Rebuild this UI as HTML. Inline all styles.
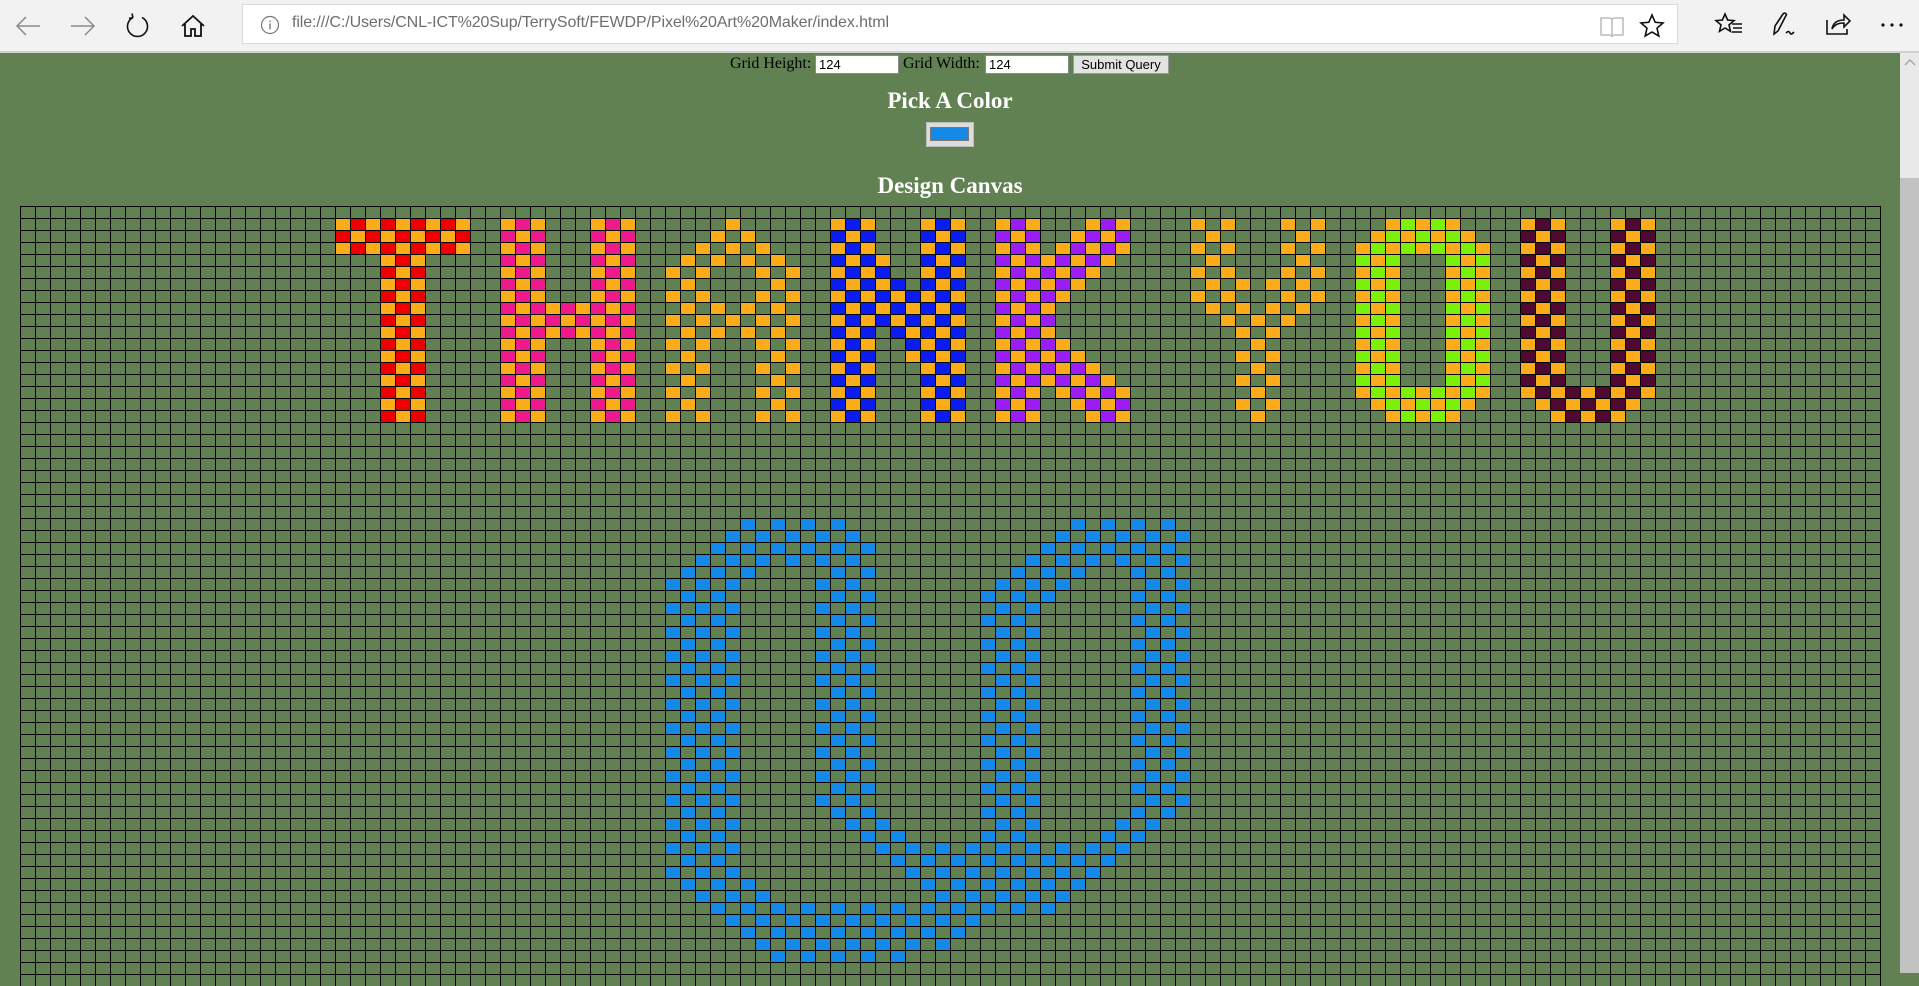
<!DOCTYPE html>
<html><head><meta charset="utf-8">
<style>
html,body{margin:0;padding:0;width:1919px;height:973px;overflow:hidden;background:#628153;}
#tb{position:absolute;left:0;top:0;width:1919px;height:51px;background:#f2f2f2;border-bottom:2px solid #cfcfcf;}
#addr{position:absolute;left:242px;top:4px;width:1436px;height:40px;background:#fff;border:1px solid #d9d9d9;box-sizing:border-box;}
#url{position:absolute;left:49px;top:9px;font:16px "Liberation Sans",sans-serif;color:#6e6e6e;white-space:nowrap;letter-spacing:-0.1px;}
svg.i{position:absolute;}
#sb{position:absolute;left:1900px;top:53px;width:19px;height:920px;background:#e9e9e9;}
#thumb{position:absolute;left:1900px;top:178px;width:19px;height:795px;background:#c2c2c2;}
.lbl{position:absolute;font:16px "Liberation Serif",serif;color:#000;top:55px;}
.inp{position:absolute;top:55px;height:19px;background:#fff;border:1px solid #8a8a8a;box-sizing:border-box;font:13px "Liberation Sans",sans-serif;padding-left:3px;line-height:17px;}
#btn{position:absolute;left:1073px;top:55px;width:96px;height:19px;background:#e3e3e3;border:1px solid #9a9a9a;box-sizing:border-box;font:13px "Liberation Sans",sans-serif;text-align:center;line-height:17px;color:#000;}
h2{position:absolute;margin:0;width:1900px;left:0;text-align:center;font:bold 23px "Liberation Serif",serif;color:#fff;}
#sw{position:absolute;left:926px;top:122px;width:48px;height:25px;background:#dcdcdc;border:1px solid #bdbdbd;box-sizing:border-box;}
#sw div{position:absolute;left:3px;top:4px;width:39px;height:14px;background:#1589e8;border:1px solid #777;box-sizing:border-box;}
#grid{position:absolute;left:20px;top:206px;width:1861px;height:780px;
background-image:linear-gradient(to right,#000 1px,transparent 1px),linear-gradient(to bottom,#000 1px,transparent 1px);
background-size:15px 12px;}
#grid i{position:absolute;width:14px;height:11px;}
</style></head><body>
<div id="tb">
<svg class="i" style="left:14px;top:14px" width="28" height="24" viewBox="0 0 28 24"><path d="M26 12H3M12 3L3 12l9 9" fill="none" stroke="#8a8a8a" stroke-width="1.5"/></svg>
<svg class="i" style="left:69px;top:14px" width="28" height="24" viewBox="0 0 28 24"><path d="M2 12h23M16 3l9 9-9 9" fill="none" stroke="#8a8a8a" stroke-width="1.5"/></svg>
<svg class="i" style="left:124px;top:12px" width="28" height="28" viewBox="0 0 28 28"><path d="M9 5.5A10 10 0 1 0 18 5.5M9 5.5L8 1.5M9 5.5L5 6.5" fill="none" stroke="#111" stroke-width="1.6"/></svg>
<svg class="i" style="left:180px;top:13px" width="26" height="26" viewBox="0 0 26 26"><path d="M2 13L13 3l11 10M5 11v12h6v-7h4v7h6V11" fill="none" stroke="#111" stroke-width="1.8"/></svg>
<div id="addr">
<svg class="i" style="left:17px;top:10px" width="20" height="20" viewBox="0 0 20 20"><circle cx="10" cy="10" r="8.5" fill="none" stroke="#777" stroke-width="1.2"/><path d="M10 8.5v6M10 5.5v1.5" stroke="#777" stroke-width="1.4"/></svg>
<div id="url">file:///C:/Users/CNL-ICT%20Sup/TerrySoft/FEWDP/Pixel%20Art%20Maker/index.html</div>
<svg class="i" style="left:1356px;top:10px" width="26" height="24" viewBox="0 0 26 24"><path d="M2 3h8c2 0 3 1 3 2v17c0-1-1-2-3-2H2zM24 3h-8c-2 0-3 1-3 2v17c0-1 1-2 3-2h8z" fill="none" stroke="#bbb" stroke-width="1.5"/></svg>
<svg class="i" style="left:1396px;top:8px" width="26" height="26" viewBox="0 0 26 26"><path d="M13 2l3.2 7.3 7.8.7-6 5.2 1.8 7.8L13 19l-6.8 4 1.8-7.8-6-5.2 7.8-.7z" fill="none" stroke="#111" stroke-width="1.6"/></svg>
</div>
<svg class="i" style="left:1714px;top:12px" width="30" height="26" viewBox="0 0 30 26"><path d="M11 2l2.6 6 6.4.6-5 4.3 1.5 6.4L11 16l-5.5 3.3 1.5-6.4-5-4.3 6.4-.6z" fill="none" stroke="#111" stroke-width="1.6"/><path d="M18 12h10M19 16h9M18 20h10" stroke="#111" stroke-width="1.6"/></svg>
<svg class="i" style="left:1771px;top:11px" width="26" height="26" viewBox="0 0 26 26"><path d="M3 23L4 15 12 3c1-1.5 3-1 3.5.5L7 20zM7 20l-4 3M15 22c2-2 3-2 4 0s2 1 4-1" fill="none" stroke="#111" stroke-width="1.6"/></svg>
<svg class="i" style="left:1824px;top:11px" width="28" height="26" viewBox="0 0 28 26"><path d="M3 9v14h20v-5M8 18c1-6 5-9 12-9V4l6 6-6 6v-4c-5 0-9 1-12 6z" fill="none" stroke="#111" stroke-width="1.6"/></svg>
<svg class="i" style="left:1880px;top:22px" width="26" height="6" viewBox="0 0 26 6"><circle cx="3" cy="3" r="1.6" fill="#111"/><circle cx="12" cy="3" r="1.6" fill="#111"/><circle cx="21" cy="3" r="1.6" fill="#111"/></svg>
</div>
<div id="sb"></div><div id="thumb"></div>
<svg class="i" style="left:1904px;top:58px" width="12" height="8" viewBox="0 0 12 8"><path d="M1 7l5-5 5 5" fill="none" stroke="#999" stroke-width="1.2"/></svg>

<div class="lbl" style="left:730px">Grid Height:</div>
<div class="inp" style="left:815px;width:84px">124</div>
<div class="lbl" style="left:903px">Grid Width:</div>
<div class="inp" style="left:985px;width:84px">124</div>
<div id="btn">Submit Query</div>
<h2 style="top:88px">Pick A Color</h2>
<div id="sw"><div></div></div>
<h2 style="top:173px">Design Canvas</h2>
<div id="grid"></div>
<script>
var O='#fcab19',g=document.getElementById('grid'),h='';
function px(r,c,col){h+='<i style="left:'+(c*15+1)+'px;top:'+(r*12+1)+'px;background:'+col+'"></i>';}
function f(r,a,b,col,p){for(var c=a;c<=b;c++){px(r,c,((r+c)%2==p)?O:col);}}
function only(r,a,b,col,p){for(var c=a;c<=b;c++){if((r+c)%2==p)px(r,c,col);}}
var r;
for(r=1;r<=3;r++)f(r,21,29,'#ee0000',0);
for(r=4;r<=17;r++)f(r,24,26,'#ee0000',0);
for(r=1;r<=17;r++){f(r,32,34,'#ee1a8c',1);f(r,38,40,'#ee1a8c',1);}
for(r=8;r<=10;r++)f(r,35,37,'#ee1a8c',1);
var A={1:[47],2:[46,48],3:[45,47,49],4:[44,46,48,50],5:[43,45,49,51],6:[44,50],7:[43,45,49,51],8:[44,46,48,50],9:[43,45,47,49,51],10:[44,46,48,50]};
for(r=11;r<=17;r++)A[r]=(r%2)?[43,45,49,51]:[44,50];
for(r in A)A[r].forEach(function(c){px(+r,c,O);});
var B='#0a1cf0';
for(r=1;r<=17;r++){f(r,54,56,B,1);f(r,60,62,B,1);}
var Nd={4:[57,57],5:[57,57],6:[57,58],7:[57,59],8:[57,59],9:[57,59],10:[58,59],11:[59,59],12:[59,59]};
for(r in Nd)f(+r,Nd[r][0],Nd[r][1],B,1);
var P='#9b1cf5';
for(r=1;r<=17;r++)f(r,65,67,P,0);
var Kd={1:[71,73],2:[70,73],3:[69,73],4:[68,72],5:[68,71],6:[68,70],7:[68,69],8:[68,68],9:[68,68],10:[68,68],11:[68,69],12:[68,70],13:[68,71],14:[68,72],15:[69,73],16:[70,73],17:[71,73]};
for(r in Kd)f(+r,Kd[r][0],Kd[r][1],P,0);
var Y={1:[78,80,84,86],2:[79,85],3:[78,80,84,86],4:[79,85],5:[78,80,84,86],6:[79,81,83,85],7:[78,80,84,86],8:[79,81,83,85],9:[80,82,84],10:[81,83],11:[82],12:[81,83],13:[82],14:[81,83],15:[82],16:[81,83],17:[82]};
for(r in Y)Y[r].forEach(function(c){px(+r,c,O);});
var G='#7df00a';
f(1,91,95,G,0);f(2,90,96,G,0);f(3,89,97,G,0);
for(r=4;r<=14;r++){f(r,89,91,G,0);f(r,95,97,G,0);}
f(15,89,97,G,0);f(16,90,96,G,0);f(17,91,95,G,0);
var M='#4f0830';
for(r=1;r<=15;r++){f(r,100,102,M,1);f(r,106,108,M,1);}
f(15,103,105,M,1);f(16,101,107,M,1);f(17,102,106,M,1);
var HB='#1589e8';
var H={26:[[48,55],[70,76]],27:[[47,56],[69,77]],28:[[46,56],[68,76]],29:[[45,56],[67,77]],
30:[[44,48],[53,56],[66,70],[74,77]],31:[[43,47],[53,56],[65,69],[74,77]],32:[[43,47],[53,56],[64,68],[74,77]],
50:[[43,47],[53,57],[64,67],[73,77]],51:[[43,47],[54,58],[64,67],[72,76]],52:[[43,47],[55,59],[64,67],[71,75]],
53:[[43,47],[56,73]],54:[[43,47],[57,72]],55:[[43,47],[58,72]],56:[[44,49],[59,71]],57:[[45,50],[61,70]],
58:[[46,68]],59:[[47,63]],60:[[48,62]],61:[[49,61]],62:[[50,58]]};
for(r=33;r<=49;r++)H[r]=[[43,47],[53,56],[64,67],[74,77]];
for(r in H)H[r].forEach(function(s){only(+r,s[0],s[1],HB,0);});
g.innerHTML=h;
</script>
</body></html>
